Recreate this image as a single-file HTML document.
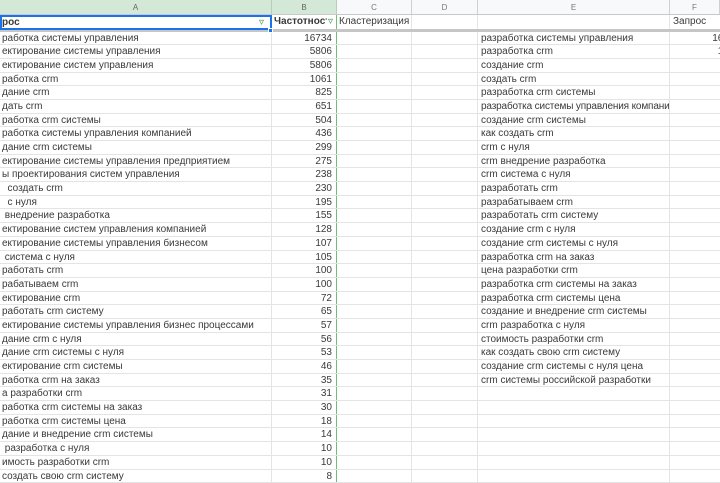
<!DOCTYPE html>
<html><head><meta charset="utf-8"><style>
*{box-sizing:border-box;margin:0;padding:0}
body{width:720px;height:480px;overflow:hidden;background:#fff;font-family:"Liberation Sans",Arial,sans-serif;font-size:10px;color:#3a3a3a;position:relative}
.ch{position:absolute;top:0;height:15px;background:#f8f9fa;border-right:1px solid #d0d0d0;border-bottom:1px solid #c8c8c8;font-size:8px;color:#777;text-align:center;line-height:15px}
.ch.sel{background:#d3e8d6;color:#666;border-right-color:#b9cdbc}
#g{position:absolute;left:0;top:31.5px;width:720px}
.row{position:relative;width:720px;height:13.69px;border-bottom:1px solid #e4e4e4}
.c{position:absolute;top:0;height:100%;border-right:1px solid #e4e4e4;white-space:pre;overflow:hidden;line-height:14px;padding:0 2px}
.a{left:0;width:272px}.b{left:272px;width:65px;text-align:right;padding-right:4px;border-right:1px solid #6bbf7b}.cc{left:337px;width:75px}.d{left:412px;width:66px}.e{left:478px;width:192px;padding-left:3px}.f{left:670px;width:75px;text-align:right;padding-right:4px}
.hd{position:absolute;left:0;top:15px;width:720px;height:17px;border-bottom:3px solid #c4c7c5}
</style></head><body>
<div class="ch sel" style="left:0;width:272px">A</div>
<div class="ch sel" style="left:272px;width:65px">B</div>
<div class="ch" style="left:337px;width:75px">C</div>
<div class="ch" style="left:412px;width:66px">D</div>
<div class="ch" style="left:478px;width:192px">E</div>
<div class="ch" style="left:670px;width:50px">F</div>
<div class="hd">
<div class="c a" style="font-weight:bold;line-height:12px;border:2px solid #1a73e8;height:15px;padding-left:0">рос<span style="position:absolute;right:6px;top:0;color:#3c8f4c;font-weight:normal">&#9663;</span></div>
<div class="c b" style="font-weight:bold;text-align:left;line-height:14px;padding-left:2px;height:14px">Частотност<span style="position:absolute;right:3px;top:0;background:#fff;color:#3c8f4c;font-weight:normal;padding-left:1px">&#9663;</span></div>
<div class="c cc" style="line-height:14px;height:14px">Кластеризация</div><div class="c d" style="height:14px"></div><div class="c e" style="height:14px"></div>
<div class="c f" style="text-align:left;padding-left:3px;line-height:14px;height:14px">Запрос</div>
</div>
<div id="g">
<div class="row"><div class="c a">работка системы управления</div><div class="c b">16734</div><div class="c cc"></div><div class="c d"></div><div class="c e">разработка системы управления</div><div class="c f">16734</div></div>
<div class="row"><div class="c a">ектирование системы управления</div><div class="c b">5806</div><div class="c cc"></div><div class="c d"></div><div class="c e">разработка crm</div><div class="c f">1061</div></div>
<div class="row"><div class="c a">ектирование систем управления</div><div class="c b">5806</div><div class="c cc"></div><div class="c d"></div><div class="c e">создание crm</div><div class="c f">825</div></div>
<div class="row"><div class="c a">работка crm</div><div class="c b">1061</div><div class="c cc"></div><div class="c d"></div><div class="c e">создать crm</div><div class="c f">651</div></div>
<div class="row"><div class="c a">дание crm</div><div class="c b">825</div><div class="c cc"></div><div class="c d"></div><div class="c e">разработка crm системы</div><div class="c f">504</div></div>
<div class="row"><div class="c a">дать crm</div><div class="c b">651</div><div class="c cc"></div><div class="c d"></div><div class="c e" style="letter-spacing:-0.15px">разработка системы управления компанией</div><div class="c f">436</div></div>
<div class="row"><div class="c a">работка crm системы</div><div class="c b">504</div><div class="c cc"></div><div class="c d"></div><div class="c e">создание crm системы</div><div class="c f">299</div></div>
<div class="row"><div class="c a">работка системы управления компанией</div><div class="c b">436</div><div class="c cc"></div><div class="c d"></div><div class="c e">как создать crm</div><div class="c f">230</div></div>
<div class="row"><div class="c a">дание crm системы</div><div class="c b">299</div><div class="c cc"></div><div class="c d"></div><div class="c e">crm с нуля</div><div class="c f">195</div></div>
<div class="row"><div class="c a">ектирование системы управления предприятием</div><div class="c b">275</div><div class="c cc"></div><div class="c d"></div><div class="c e">crm внедрение разработка</div><div class="c f">155</div></div>
<div class="row"><div class="c a">ы проектирования систем управления</div><div class="c b">238</div><div class="c cc"></div><div class="c d"></div><div class="c e">crm система с нуля</div><div class="c f">105</div></div>
<div class="row"><div class="c a">  создать crm</div><div class="c b">230</div><div class="c cc"></div><div class="c d"></div><div class="c e">разработать crm</div><div class="c f">100</div></div>
<div class="row"><div class="c a">  с нуля</div><div class="c b">195</div><div class="c cc"></div><div class="c d"></div><div class="c e">разрабатываем crm</div><div class="c f">100</div></div>
<div class="row"><div class="c a"> внедрение разработка</div><div class="c b">155</div><div class="c cc"></div><div class="c d"></div><div class="c e">разработать crm систему</div><div class="c f">65</div></div>
<div class="row"><div class="c a">ектирование систем управления компанией</div><div class="c b">128</div><div class="c cc"></div><div class="c d"></div><div class="c e">создание crm с нуля</div><div class="c f">56</div></div>
<div class="row"><div class="c a">ектирование системы управления бизнесом</div><div class="c b">107</div><div class="c cc"></div><div class="c d"></div><div class="c e">создание crm системы с нуля</div><div class="c f">53</div></div>
<div class="row"><div class="c a"> система с нуля</div><div class="c b">105</div><div class="c cc"></div><div class="c d"></div><div class="c e">разработка crm на заказ</div><div class="c f">35</div></div>
<div class="row"><div class="c a">работать crm</div><div class="c b">100</div><div class="c cc"></div><div class="c d"></div><div class="c e">цена разработки crm</div><div class="c f">31</div></div>
<div class="row"><div class="c a">рабатываем crm</div><div class="c b">100</div><div class="c cc"></div><div class="c d"></div><div class="c e">разработка crm системы на заказ</div><div class="c f">30</div></div>
<div class="row"><div class="c a">ектирование crm</div><div class="c b">72</div><div class="c cc"></div><div class="c d"></div><div class="c e">разработка crm системы цена</div><div class="c f">18</div></div>
<div class="row"><div class="c a">работать crm систему</div><div class="c b">65</div><div class="c cc"></div><div class="c d"></div><div class="c e">создание и внедрение crm системы</div><div class="c f">14</div></div>
<div class="row"><div class="c a">ектирование системы управления бизнес процессами</div><div class="c b">57</div><div class="c cc"></div><div class="c d"></div><div class="c e">crm разработка с нуля</div><div class="c f">10</div></div>
<div class="row"><div class="c a">дание crm с нуля</div><div class="c b">56</div><div class="c cc"></div><div class="c d"></div><div class="c e">стоимость разработки crm</div><div class="c f">10</div></div>
<div class="row"><div class="c a">дание crm системы с нуля</div><div class="c b">53</div><div class="c cc"></div><div class="c d"></div><div class="c e">как создать свою crm систему</div><div class="c f">8</div></div>
<div class="row"><div class="c a">ектирование crm системы</div><div class="c b">46</div><div class="c cc"></div><div class="c d"></div><div class="c e">создание crm системы с нуля цена</div><div class="c f">5</div></div>
<div class="row"><div class="c a">работка crm на заказ</div><div class="c b">35</div><div class="c cc"></div><div class="c d"></div><div class="c e">crm системы российской разработки</div><div class="c f">3</div></div>
<div class="row"><div class="c a">а разработки crm</div><div class="c b">31</div><div class="c cc"></div><div class="c d"></div><div class="c e"></div><div class="c f"></div></div>
<div class="row"><div class="c a">работка crm системы на заказ</div><div class="c b">30</div><div class="c cc"></div><div class="c d"></div><div class="c e"></div><div class="c f"></div></div>
<div class="row"><div class="c a">работка crm системы цена</div><div class="c b">18</div><div class="c cc"></div><div class="c d"></div><div class="c e"></div><div class="c f"></div></div>
<div class="row"><div class="c a">дание и внедрение crm системы</div><div class="c b">14</div><div class="c cc"></div><div class="c d"></div><div class="c e"></div><div class="c f"></div></div>
<div class="row"><div class="c a"> разработка с нуля</div><div class="c b">10</div><div class="c cc"></div><div class="c d"></div><div class="c e"></div><div class="c f"></div></div>
<div class="row"><div class="c a">имость разработки crm</div><div class="c b">10</div><div class="c cc"></div><div class="c d"></div><div class="c e"></div><div class="c f"></div></div>
<div class="row"><div class="c a">создать свою crm систему</div><div class="c b">8</div><div class="c cc"></div><div class="c d"></div><div class="c e"></div><div class="c f"></div></div>
</div>
<div style="position:absolute;left:268px;top:28px;width:5px;height:5px;background:#1a73e8;border:1px solid #fff"></div>
</body></html>
